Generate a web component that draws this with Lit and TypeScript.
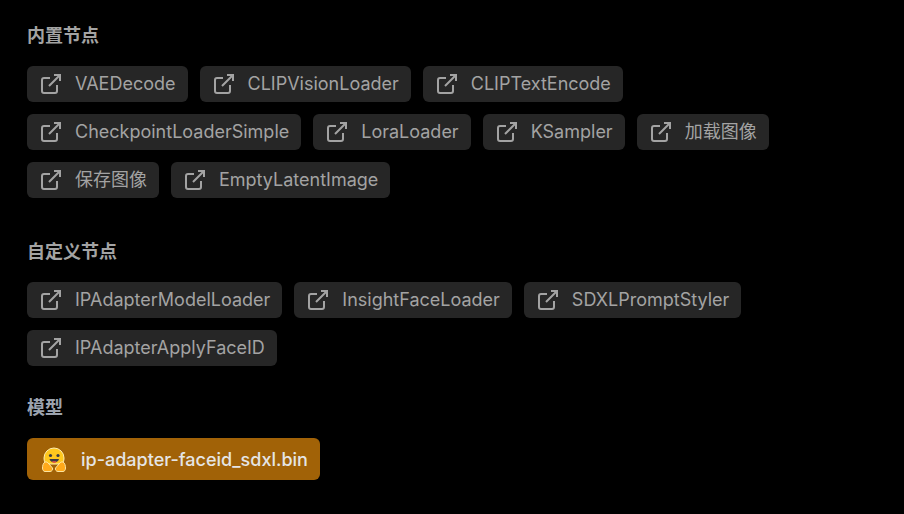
import { LitElement, css, html, svg } from "lit";
import { customElement } from "lit/decorators.js";

const sections = [
  { title: "内置节点", items: ["VAEDecode", "CLIPVisionLoader", "CLIPTextEncode", "CheckpointLoaderSimple", "LoraLoader", "KSampler", "加载图像", "保存图像", "EmptyLatentImage"] },
  { title: "自定义节点", items: ["IPAdapterModelLoader", "InsightFaceLoader", "SDXLPromptStyler", "IPAdapterApplyFaceID"] },
];

const linkIcon = svg`<path d="M18 13v6a2 2 0 0 1-2 2H5a2 2 0 0 1-2-2V8a2 2 0 0 1 2-2h6M15 3h6v6M10 14 21 3" fill="none" stroke="currentColor" stroke-width="2"/>`;

@customElement("app-root")
export class AppRoot extends LitElement {
  static styles = css`
    :host {
      display: block;
      min-height: 514px;
      background: #000;
      font-family: Inter, "Noto Sans CJK SC", sans-serif;
      box-sizing: border-box;
      padding: 24px 27px 0;
    }
    h3 {
      margin: 0;
      font-size: 18px;
      line-height: 24px;
      font-weight: 700;
      color: #a3a3a3;
    }
    h3.model-title {
      color: #9ca3af;
    }
    .tags {
      display: flex;
      flex-wrap: wrap;
      gap: 12px;
      margin-top: 18px;
      width: 760px;
    }
    .tags.first {
      margin-bottom: 42px;
    }
    .tags.second {
      margin-bottom: 30px;
    }
    .tag {
      display: flex;
      align-items: center;
      gap: 12px;
      height: 36px;
      padding: 0 12px;
      border-radius: 6px;
      background: #262626;
      color: #a3a3a3;
      font-size: 18px;
      line-height: 36px;
      white-space: nowrap;
    }
    .tag svg {
      width: 24px;
      height: 24px;
      color: #a3a3a3;
      flex: none;
    }
    .model {
      display: flex;
      align-items: center;
      gap: 12px;
      width: max-content;
      height: 42px;
      padding: 0 12px;
      border-radius: 6px;
      background: #a16207;
      color: #e5e5e5;
      font-size: 18px;
      font-weight: 500;
      margin-top: 18px;
    }
    .model svg {
      width: 30px;
      height: 30px;
      flex: none;
    }
  `;

  render() {
    return html`
      ${sections.map(
        (s, i) => html`
          <h3>${s.title}</h3>
          <div class="tags ${i === 0 ? "first" : "second"}">
            ${s.items.map(
              (t) => html`<div class="tag"><svg viewBox="0 0 24 24">${linkIcon}</svg>${t}</div>`
            )}
          </div>
        `
      )}
      <h3 class="model-title">模型</h3>
      <div class="model">
        <svg viewBox="0 0 30 30">
          <path d="M5 14a10 10 0 0 1 20 0c0 3-1 5-2 6H7c-1-1-2-3-2-6z" fill="#ffc81e" stroke="#ffeeb0" stroke-width="1"/>
          <circle cx="11.500" cy="11.500" r="1.600" fill="#3a3b45"/>
          <circle cx="19" cy="11.500" r="1.600" fill="#3a3b45"/>
          <path d="M10.500 15c1 4.500 8.500 4.500 9.500 0z" fill="#3a3b45"/>
          <path d="M13 17.200c1 2 3.500 2 4.500 0z" fill="#f3524c"/>
          <path d="M3.500 24c0-2 .5-5 2.500-6 1.500-.5 3 .5 4 2l3.500 4c.5 1.500-.5 3.500-2.500 3.500H6c-1.500 0-2.500-1.500-2.500-3.500z" fill="#ffa91a" stroke="#ffeeb0" stroke-width="0.900"/>
          <path d="M26.500 24c0-2-.5-5-2.500-6-1.500-.5-3 .5-4 2l-3.500 4c-.5 1.500.5 3.500 2.500 3.500h5c1.500 0 2.500-1.500 2.500-3.500z" fill="#ffa91a" stroke="#ffeeb0" stroke-width="0.900"/>
        </svg>
        ip-adapter-faceid_sdxl.bin
      </div>
    `;
  }
}
